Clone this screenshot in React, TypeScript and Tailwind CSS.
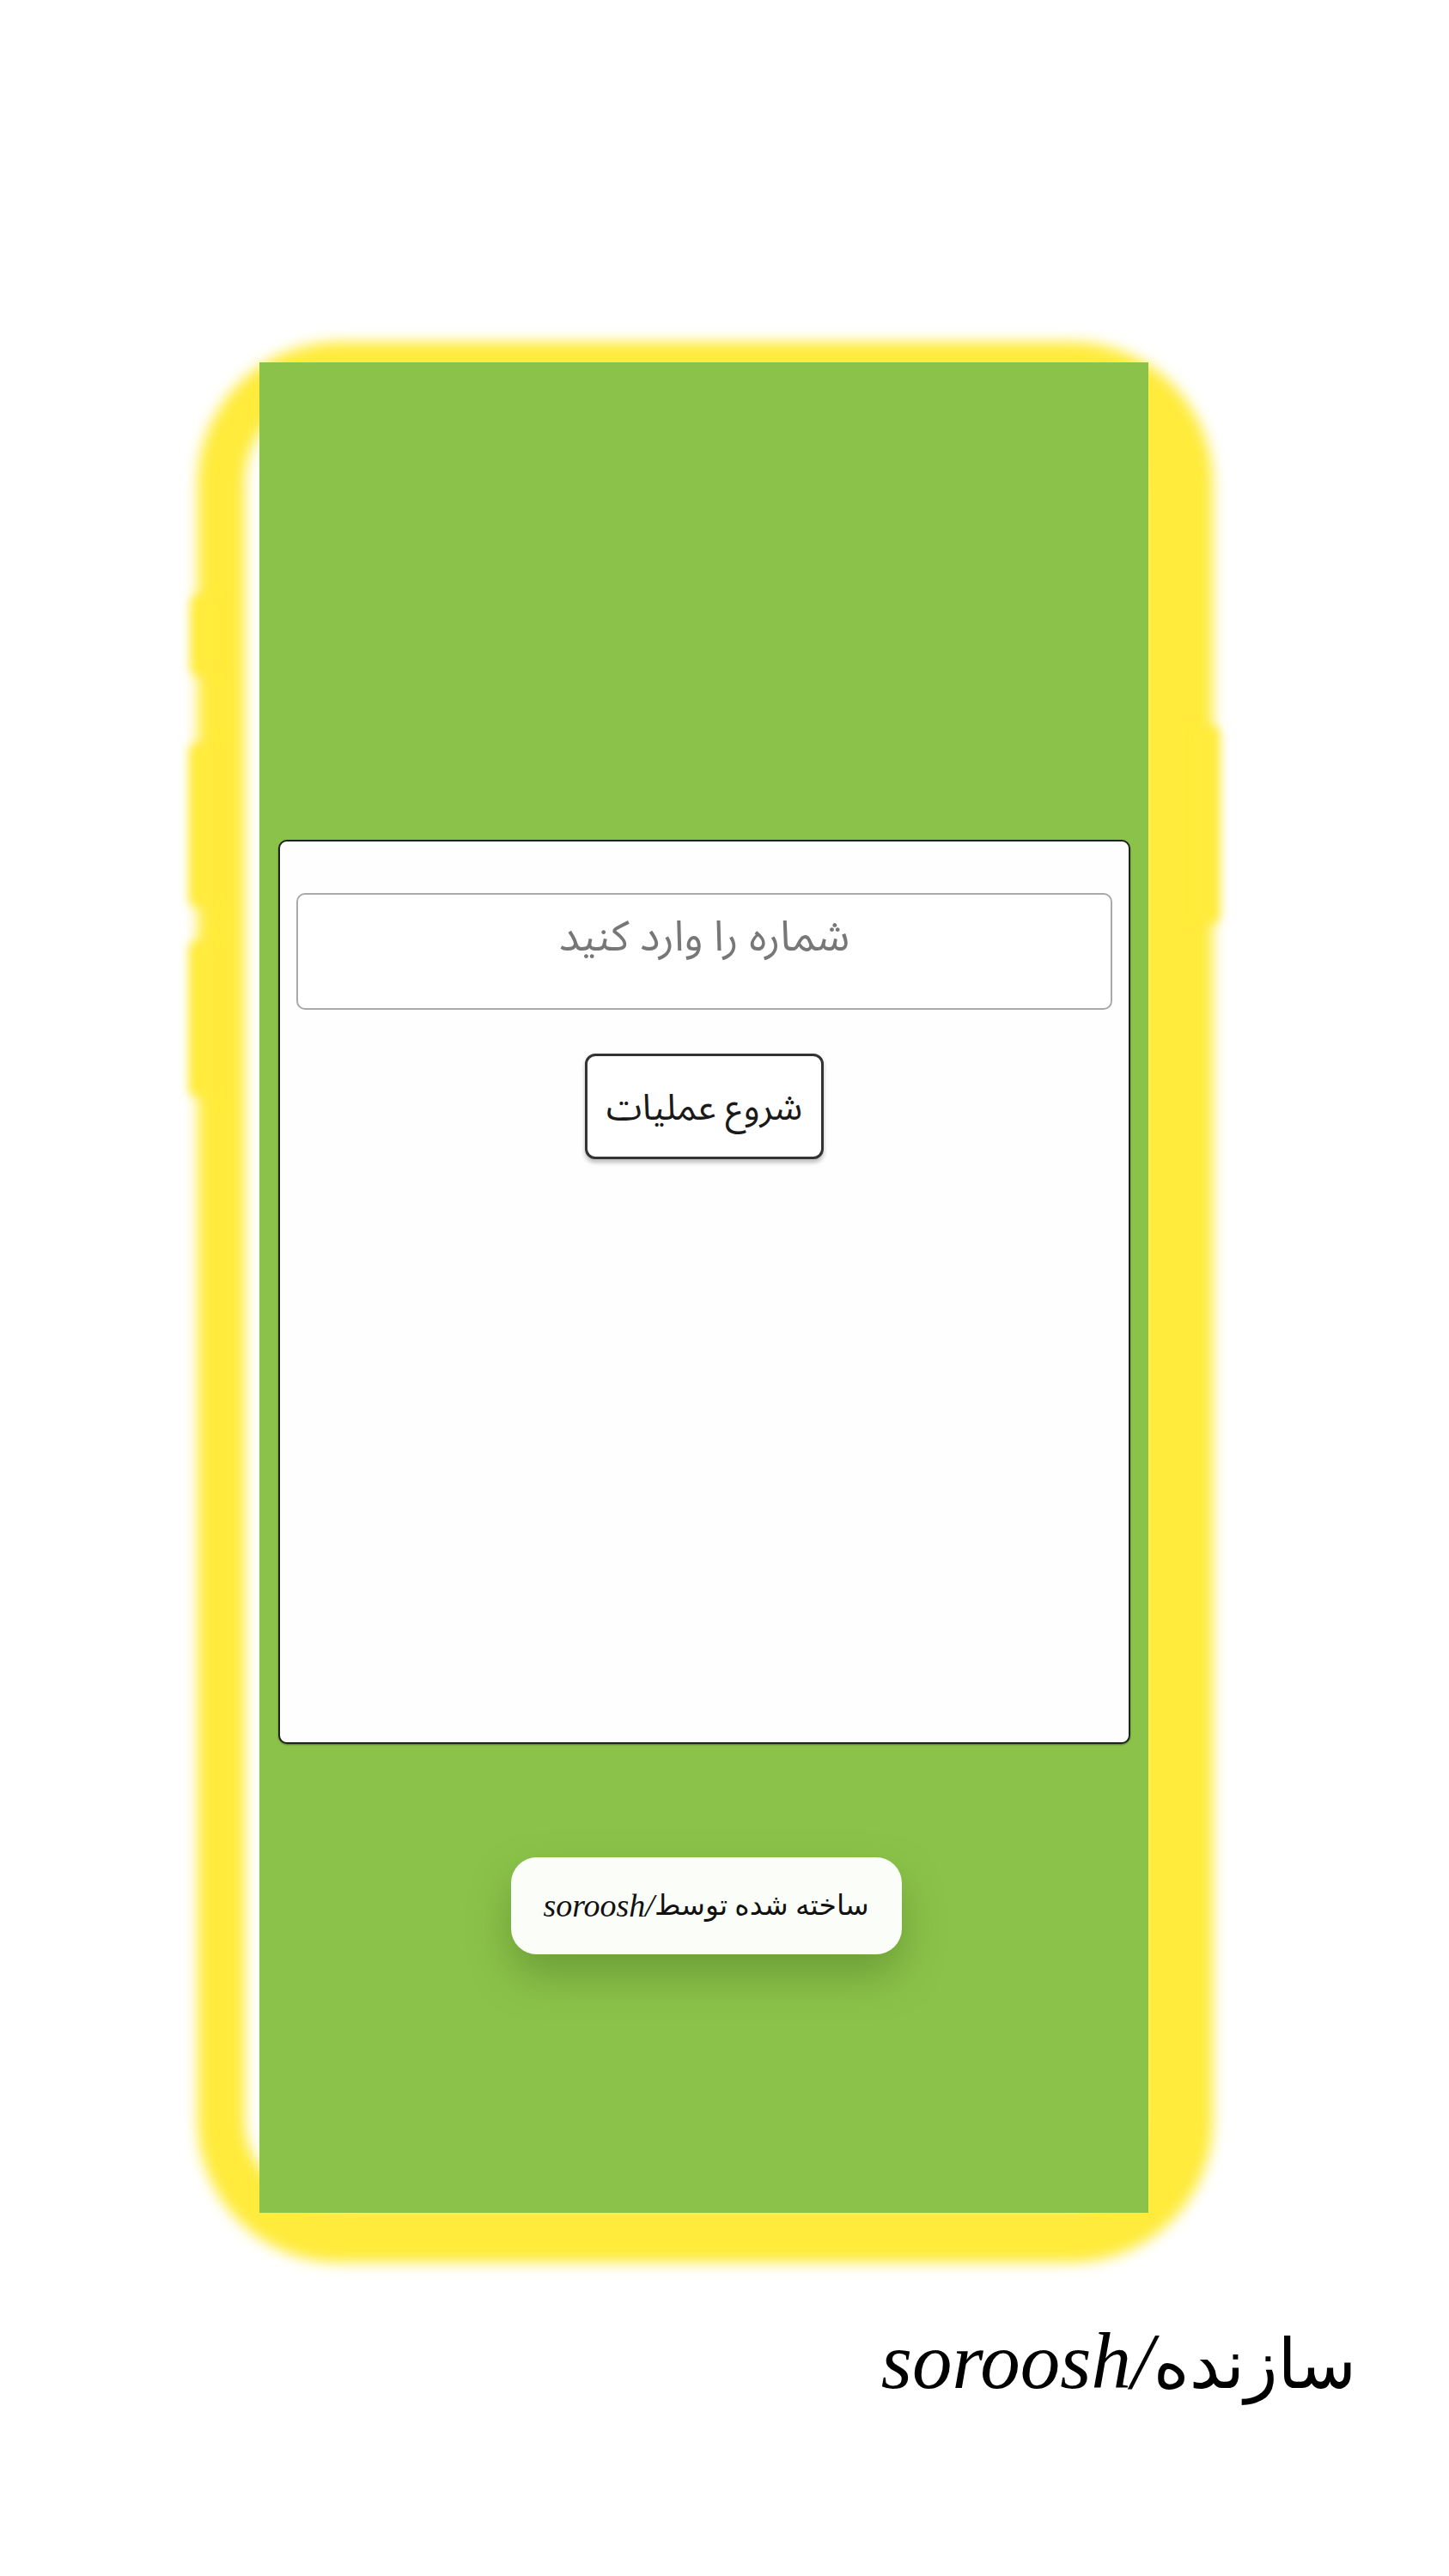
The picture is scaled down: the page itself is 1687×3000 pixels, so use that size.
import React from "react";

const sansFa = { fontFamily: '"Noto Sans Arabic", "DejaVu Sans", sans-serif' };
const serifFa = { fontFamily: '"Liberation Serif", "DejaVu Serif", "DejaVu Sans", serif' };

function PhoneFrame() {
  return (
    <>
      {/* blurred yellow outline of the phone body */}
      <div className="pointer-events-none absolute -left-[72px] -right-[75px] -top-[24px] -bottom-[58px] rounded-[165px] border-[55px] border-r-[85px] border-b-[66px] border-[#ffeb3b] blur-[8px]" />
      {/* side keys */}
      <div className="pointer-events-none absolute -left-[80px] top-[270px] h-[96px] w-[30px] rounded-[10px] bg-[#ffeb3b] blur-[6px]" />
      <div className="pointer-events-none absolute -left-[82px] top-[443px] h-[192px] w-[30px] rounded-[10px] bg-[#ffeb3b] blur-[6px]" />
      <div className="pointer-events-none absolute -left-[82px] top-[673px] h-[183px] w-[30px] rounded-[10px] bg-[#ffeb3b] blur-[6px]" />
      <div className="pointer-events-none absolute -right-[83px] top-[423px] h-[231px] w-[30px] rounded-[10px] bg-[#ffeb3b] blur-[6px]" />
    </>
  );
}

export default function App() {
  return (
    <div className="min-h-[3000px] w-full bg-white">
      <div className="pt-[422px] pl-[302px]">
        <div className="relative w-[1035px]">
          <PhoneFrame />
          <div className="relative flex h-[2155px] flex-col bg-[#8bc34a] pt-[556px]">
            {/* form card */}
            <div
              dir="rtl"
              className="ml-[22px] flex h-[1053px] w-[992px] flex-col items-center rounded-[10px] border-2 border-[#1f231c] bg-[#fefefe] px-[19px] pt-[60px] shadow-[0_1px_2px_rgba(0,0,0,0.4)]"
            >
              <input
                type="text"
                placeholder="شماره را وارد کنید"
                style={sansFa}
                className="h-[136px] w-full rounded-[10px] border-2 border-[#a9a9a9] bg-white pb-[34px] text-center text-[49px] text-[#333] outline-none placeholder:text-[#777]"
              />
              <button
                type="button"
                style={sansFa}
                className="mt-[51px] flex h-[123px] w-[278px] items-center justify-center rounded-[12px] border-[3px] border-[#333] bg-white pt-[4px] text-[42px] text-[#1a1a1a] shadow-[0_4px_5px_rgba(0,0,0,0.25)]"
              >
                شروع عملیات
              </button>
            </div>

            {/* credit pill */}
            <div className="mt-[132px] flex justify-center pl-[5px]">
              <div
                dir="rtl"
                style={serifFa}
                className="flex h-[113px] w-[455px] items-center justify-center rounded-[30px] bg-[#fbfdf8] text-[#111] shadow-[0_24px_50px_rgba(70,110,30,0.45)]"
              >
                <span className="text-[33px]">ساخته شده توسط</span>
                <span className="text-[38px] italic">/soroosh</span>
              </div>
            </div>
          </div>
        </div>
      </div>

      <div className="mt-[117px] flex justify-end pr-[108px]">
        <p dir="rtl" style={serifFa} className="leading-[1.2] text-black">
          <span className="text-[80px]">سازنده</span>
          <span className="text-[93px] italic">/soroosh</span>
        </p>
      </div>
    </div>
  );
}
